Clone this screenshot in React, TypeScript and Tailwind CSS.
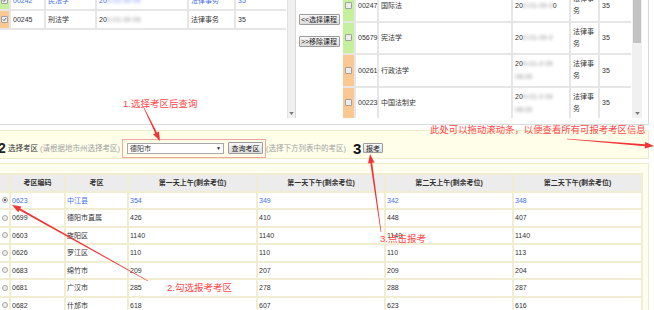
import React from "react";

function Chk({ checked }: { checked?: boolean }) {
  return (
    <span className="relative inline-block w-[7px] h-[7px] border border-[#a0a0a0] bg-[#ededed] rounded-[1px]">
      {checked && (
        <svg viewBox="0 0 7 7" className="absolute inset-0 w-full h-full">
          <path d="M1.3 3.4 L2.8 4.9 L5.6 1.6" stroke="#333" strokeWidth="1.1" fill="none" />
        </svg>
      )}
    </span>
  );
}

function Radio({ checked }: { checked?: boolean }) {
  return (
    <span className="flex items-center justify-center w-[6px] h-[6px] rounded-full border border-[#a8a8a8] bg-[#eeeeee]">
      {checked && <span className="w-[2px] h-[2px] rounded-full bg-[#333]" />}
    </span>
  );
}

function Blur({ children, blue }: { children: React.ReactNode; blue?: boolean }) {
  return (
    <span className={"inline-block blur-[1.4px] " + (blue ? "text-[#7e9ef0]" : "text-[#9a9a9a]")}>{children}</span>
  );
}

function Arrow({ x1, y1, x2, y2 }: { x1: number; y1: number; x2: number; y2: number }) {
  const w1 = 0.6, w2 = 2, L = 9, W = 6.5;
  const dx = x2 - x1, dy = y2 - y1;
  const len = Math.hypot(dx, dy);
  const ux = dx / len, uy = dy / len;
  const nx = -uy, ny = ux;
  const bx = x2 - ux * L, by = y2 - uy * L;
  const p = [
    [x1 + (nx * w1) / 2, y1 + (ny * w1) / 2],
    [bx + (nx * w2) / 2, by + (ny * w2) / 2],
    [bx + (nx * W) / 2, by + (ny * W) / 2],
    [x2, y2],
    [bx - (nx * W) / 2, by - (ny * W) / 2],
    [bx - (nx * w2) / 2, by - (ny * w2) / 2],
    [x1 - (nx * w1) / 2, y1 - (ny * w1) / 2],
  ];
  return <polygon points={p.map((q) => q.map((v) => v.toFixed(1)).join(",")).join(" ")} fill="#ef3535" />;
}

function DownArrow() {
  return (
    <svg viewBox="0 0 6 4" className="w-[5px] h-[3px] mb-[3px]">
      <path d="M0 0 H6 L3 4 Z" fill="#777" />
    </svg>
  );
}

const topBtn =
  "w-[41px] h-[11px] flex items-center justify-center border border-[#9c9c9c] rounded-[1px] bg-gradient-to-b from-[#f8f8f8] to-[#dcdcdc] text-[7px] leading-none text-[#222] whitespace-nowrap";

const leftRows = [
  { strip: "bg-[#c5f09c]", code: "00242", name: "民法学", blurT: "0-01-09 09", type: "法律事务", cr: "35", blue: true },
  { strip: "bg-[#f9c893]", code: "00245", name: "刑法学", blurT: "0-01-09 09", type: "法律事务", cr: "35", blue: false },
];

const rightRows = [
  { strip: "bg-[#c5f09c]", code: "00247", name: "国际法", two: false, end: "0" },
  { strip: "bg-[#c5f09c]", code: "05679", name: "宪法学", two: false, end: "" },
  { strip: "bg-[#f9c893]", code: "00261", name: "行政法学", two: true, end: "" },
  { strip: "bg-[#f9c893]", code: "00223", name: "中国法制史", two: true, end: "" },
];

const areas = [
  ["0623", "中江县", "354", "349", "342", "348"],
  ["0699", "德阳市直属", "426", "410", "448", "407"],
  ["0603", "旌阳区", "1140", "1140", "1140", "1140"],
  ["0626", "罗江区", "110", "110", "110", "113"],
  ["0683", "绵竹市", "209", "207", "209", "204"],
  ["0681", "广汉市", "285", "278", "288", "287"],
  ["0682", "什邡市", "618", "607", "623", "616"],
];

const headers = ["考区编码", "考区", "第一天上午(剩余考位)", "第一天下午(剩余考位)", "第二天上午(剩余考位)", "第二天下午(剩余考位)"];

export default function App() {
  return (
    <div className="relative w-[654px] h-[310px] overflow-hidden bg-white text-[7px] leading-[9px] text-[#333] font-['Liberation_Sans','Noto_Sans_CJK_SC',sans-serif]">
      {/* top selection area */}
      <div className="w-[649px] h-[125px] border-r border-b border-[#dadada]">
        <div className="flex h-[118px]">
          {/* left panel */}
          <div className="w-[296px] h-[118px] flex border-r border-[#d8d8d8] overflow-hidden">
            <div className="w-[286px] overflow-hidden">
              <div className="grid grid-cols-[9px_33px_49px_90px_45px_50px] gap-[2px] pb-[2px] bg-[#e6e6e6] -mt-[8px]">
                {leftRows.map((r, i) => {
                  const c = r.blue ? "text-[#3f6fe6]" : "text-[#333]";
                  return (
                    <React.Fragment key={i}>
                      <div className={"h-[17px] flex items-center justify-center " + r.strip}>
                        <Chk checked />
                      </div>
                      <div className={"h-[17px] bg-white flex items-center pl-[2px] " + c}>{r.code}</div>
                      <div className={"h-[17px] bg-white flex items-center pl-[2px] " + c}>{r.name}</div>
                      <div className={"h-[17px] bg-white flex items-center pl-[2px] whitespace-nowrap " + c}>
                        20<Blur blue={r.blue}>{r.blurT}</Blur>
                      </div>
                      <div className={"h-[17px] bg-white flex items-center pl-[2px] " + c}>{r.type}</div>
                      <div className={"h-[17px] bg-white flex items-center pl-[2px] " + c}>{r.cr}</div>
                    </React.Fragment>
                  );
                })}
              </div>
            </div>
            <div className="w-[8px] ml-[1px] bg-[#f0f0f0] border-l border-[#e2e2e2] flex flex-col justify-end items-center">
              <DownArrow />
            </div>
          </div>
          {/* middle buttons */}
          <div className="w-[46px] flex flex-col items-center pt-[14px] gap-[11px]">
            <div className={topBtn}>&lt;&lt;选择课程</div>
            <div className={topBtn}>&gt;&gt;移除课程</div>
          </div>
          {/* right panel */}
          <div className="w-[306px] h-[118px] flex overflow-hidden">
            <div className="w-[288px] ml-[1px] overflow-hidden">
              <div className="grid grid-cols-[11px_21px_132px_56px_27px_31px] gap-[2px] bg-[#e6e6e6] -mt-[10px]">
                {rightRows.map((r, i) => (
                  <React.Fragment key={i}>
                    <div className={"h-[30.5px] flex items-center justify-center " + r.strip}>
                      <Chk />
                    </div>
                    <div className="h-[30.5px] bg-white flex items-center pl-[2px]">{r.code}</div>
                    <div className="h-[30.5px] bg-white flex items-center pl-[2px]">{r.name}</div>
                    <div className="h-[30.5px] bg-white flex flex-col justify-center pl-[2px] leading-[13px] whitespace-nowrap">
                      {r.two ? (
                        <>
                          <span>
                            20<Blur>9-01-0 09</Blur>
                          </span>
                          <span>
                            <Blur>08:00</Blur>
                          </span>
                        </>
                      ) : (
                        <span>
                          20<Blur>0-01-09 0</Blur>
                          {r.end}
                        </span>
                      )}
                    </div>
                    <div className="h-[30.5px] bg-white flex items-center px-[2px] leading-[12px]">法律事务</div>
                    <div className="h-[30.5px] bg-white flex items-center pl-[2px]">35</div>
                  </React.Fragment>
                ))}
              </div>
            </div>
            <div className="w-[10px] ml-[1px] bg-[#f0f0f0] flex flex-col justify-between items-center">
              <div className="w-[8px] h-[43px] bg-[#c3c3c3]" />
              <DownArrow />
            </div>
          </div>
        </div>
      </div>

      <div className="h-[5px]" />

      {/* section 2 bar */}
      <div className="w-[649px] h-[29px] border-t border-b border-r border-[#eeebc8] bg-[#fefee9] flex items-center pt-[7px] whitespace-nowrap text-[7.5px]">
        <span className="-ml-[2px] text-[14px] leading-none font-bold text-[#222] w-[8px]">2</span>
        <span className="ml-[2px] w-[30px] text-[#333]">选择考区</span>
        <span className="ml-[2px] w-[82px] text-[#a3a3a3]">(请根据地市州选择考区)</span>
        <div className="w-[144px] h-[19px] border border-[#f2a4a4] flex items-center pl-[4px]">
          <div className="w-[97px] h-[11px] border border-[#a8a8a8] bg-white flex items-center justify-between pl-[2px] pr-[2px] text-[7px]">
            <span>德阳市</span>
            <span className="text-[5px] text-[#222]">▼</span>
          </div>
          <div className="ml-[4px] w-[35px] h-[12px] flex items-center justify-center border border-[#9c9c9c] rounded-[1px] bg-gradient-to-b from-[#f8f8f8] to-[#dcdcdc] text-[7px] text-[#222]">
            查询考区
          </div>
        </div>
        <span className="w-[86px] text-[#a3a3a3]">(选择下方列表中的考区)</span>
        <span className="ml-[1px] text-[15px] leading-none font-bold text-[#111] w-[9px]">3</span>
        <div className="ml-[1px] w-[20px] h-[10px] flex items-center justify-center border border-[#9c9c9c] rounded-[1px] bg-gradient-to-b from-[#f8f8f8] to-[#dcdcdc] text-[7px] text-[#222]">
          报考
        </div>
      </div>

      <div className="h-[4px]" />

      {/* exam area table */}
      <div className="w-[649px] h-[160px] border-t border-r border-[#eeebc8] bg-[#fefeee] pt-[9px]">
        <div className="w-[643px] grid grid-cols-[9px_53px_61px_127px_126px_126px_127px] gap-[2px] pt-[2px] pr-[2px] bg-[#f1edd1]">
          <div className="h-[15.5px] bg-[#ececec]" />
          {headers.map((h) => (
            <div key={h} className="h-[15.5px] bg-[#ececec] flex items-center justify-center font-bold text-[#333] whitespace-nowrap">
              {h}
            </div>
          ))}
          {areas.map((r, i) => {
            const c = i === 0 ? "text-[#4472e6]" : "text-[#333]";
            return (
              <React.Fragment key={r[0]}>
                <div className="h-[15.5px] bg-white flex items-center justify-center">
                  <Radio checked={i === 0} />
                </div>
                {r.map((v, j) => (
                  <div key={j} className={"h-[15.5px] bg-white flex items-center pl-[1px] whitespace-nowrap " + c}>
                    {v}
                  </div>
                ))}
              </React.Fragment>
            );
          })}
        </div>
      </div>

      {/* annotations */}
      <svg className="absolute left-0 top-0 w-[654px] h-[310px] pointer-events-none" viewBox="0 0 654 310">
        <Arrow x1={143} y1={106} x2={160} y2={141} />
        <Arrow x1={148} y1={281} x2={12} y2={205} />
        <Arrow x1={381} y1={232} x2={370} y2={154} />
        <Arrow x1={567} y1={139} x2={654} y2={146} />
      </svg>
      <span className="absolute left-[123px] top-[98px] text-[9.5px] leading-[11px] text-[#ff4848] whitespace-nowrap">1.选择考区后查询</span>
      <span className="absolute left-[430px] top-[124px] text-[9.4px] leading-[11px] text-[#ff4848] whitespace-nowrap">此处可以拖动滚动条，以便查看所有可报考考区信息</span>
      <span className="absolute left-[167px] top-[282px] text-[9.5px] leading-[11px] text-[#ff4848] whitespace-nowrap">2.勾选报考考区</span>
      <span className="absolute left-[380px] top-[233px] text-[9.5px] leading-[11px] text-[#ff4848] whitespace-nowrap">3.点击报考</span>
    </div>
  );
}
